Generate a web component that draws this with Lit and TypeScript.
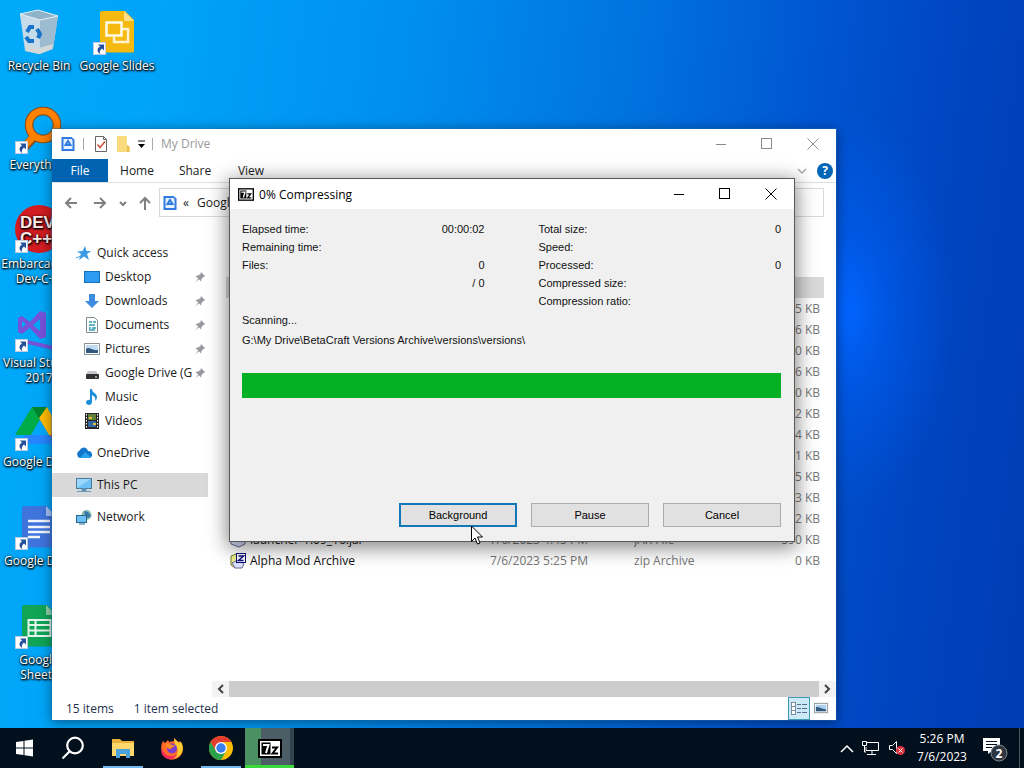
import { LitElement, html, svg, css, nothing, type TemplateResult } from "lit";
import { customElement, property } from "lit/decorators.js";
import { classMap } from "lit/directives/class-map.js";
import { styleMap } from "lit/directives/style-map.js";

const shortcutArrow = svg`
  <rect x="0.5" y="35.5" width="12" height="12" fill="#fff" stroke="#b9cbe0"/>
  <path d="M5 37.5h6v6l-2-2c-2 1.500-2.500 3-2 5.500-3.500-2.500-3-6 0-7.500z" fill="#24509c"/>`;

const docShape = (fill: string, fold: string) => svg`
  <path d="M9 4h23l9 9v31a1.500 1.500 0 0 1-1.500 1.500h-31A1.500 1.500 0 0 1 7 44V6a2 2 0 0 1 2-2z" fill="${fill}"/>
  <path d="M31 4l10 10H32a1 1 0 0 1-1-1z" fill="${fold}"/>`;

const desktopArt: Record<string, TemplateResult> = {
  bin: svg`
    <path d="M5 7l38 2-5 33-14 5-14-3z" fill="#b9d3e4"/>
    <path d="M5 7l20 6 1 34-4-1-11-3z" fill="#c5dbe9"/>
    <path d="M25 13l18-4-5 33-13 5z" fill="#9dbcd2"/>
    <path d="M5 7l18-4 20 6-18 4z" fill="#8fb3c8" stroke="#e4f0f6"/>
    <path d="M10 38l14 3 14-4-1 5-13 5-13-3z" fill="#d3d8da"/>
    <g fill="none" stroke="#1673c9" stroke-width="4"><path d="M12 25l3-5h4"/><path d="M22 22l3 5-2 4"/><path d="M19 34h-5l-3-4"/></g>`,
  slides: svg`${docShape("#f5b90f", "#ffe08a")}
    <path d="M21 30v5h14V22h-6" fill="none" stroke="#fff3cf" stroke-width="2.500"/>
    <rect x="13.500" y="15.500" width="15" height="13" fill="#f5b90f" stroke="#fffbea" stroke-width="2.500"/>${shortcutArrow}`,
  everything: svg`
    <path d="M20 30L8 43" stroke="#8a4a10" stroke-width="9"/>
    <circle cx="28" cy="19" r="14" fill="none" stroke="#8a4a10" stroke-width="8.500"/>
    <path d="M20 29L8 42" stroke="#ff8100" stroke-width="6.500"/>
    <circle cx="28" cy="19" r="14" fill="none" stroke="#ff8100" stroke-width="6.500"/>${shortcutArrow}`,
  dev: svg`
    <circle cx="24" cy="24" r="24" fill="#d21c22"/>
    <text x="5" y="23" class="devText">DEV</text><text x="5" y="39" class="devText">C++</text>${shortcutArrow}`,
  vs: svg`
    <path d="M3 14l4-2 8 6 10-11 6 2v24l-6 2-10-11-8 6-4-2zM7 17v7l4-4zM25 15l-7 6 7 6z" fill="#7652d8" fill-rule="evenodd"/>
    <path d="M12 36l36 8v4L12 40z" fill="#7652d8"/>${shortcutArrow}`,
  drive: svg`
    <path d="M17 4h15L16 32H0z" fill="#00ac47"/><path d="M17 4h15l-7 13z" fill="#00832d"/>
    <path d="M32 4l16 28H34L24 15z" fill="#ffba00"/><path d="M34 32h14l-4 9z" fill="#ea4335"/>
    <path d="M10 32h24l8 9H4z" fill="#2684fc"/>${shortcutArrow}`,
  docs: svg`${docShape("#3f74dd", "#a6c3fa")}
    <path d="M13 19h22M13 25h22M13 30h22M13 35h12" stroke="#f1f5fe" stroke-width="2.500"/>${shortcutArrow}`,
  sheets: svg`${docShape("#10a457", "#8fd3ae")}
    <path d="M13.500 19h22v16h-22zM13 24h23M13 29.500h23M20.500 19v16" fill="none" stroke="#e4f6ec" stroke-width="2"/>${shortcutArrow}`,
};

const driveGlyph = svg`
  <path d="M1.500 1h10l3 2.500V15h-13z" fill="#2f7be0"/><path d="M3.500 3h8l1 1v9h-9z" fill="#e8f1fd"/>
  <path d="M8 5l2.500 4h-5z" fill="none" stroke="#2f7be0" stroke-width="2"/>`;

const smallArt: Record<string, TemplateResult> = {
  star: svg`<path d="M9 1l1.500 5H15l-4 3 2 6-5-3.500L3 15l2-6-4-2.500 5.500-.5z" fill="#3d9be6"/><path d="M0 13l5-2" stroke="#3d9be6"/>`,
  desktop: svg`<rect x="0.500" y="2.500" width="15" height="11" fill="#2f9bf0" stroke="#1270bd"/>`,
  down: svg`<path d="M5 1h6v7h4l-7 7-7-7h4z" fill="#3c8ce0"/>`,
  document: svg`<path d="M2.500.500h8l3 3v12h-11z" fill="#fff" stroke="#7d8a92"/><path d="M5 5h3M9 5h3M5 8h6M5 11h2M8 11h4M5 13h6" stroke="#2f9aa8" stroke-width="1.500"/>`,
  picture: svg`<rect x="0.500" y="2.500" width="15" height="11" fill="#fff" stroke="#8b9399"/><rect x="2" y="4" width="12" height="8" fill="#bfdcf2"/><path d="M2 8c3-3 6 2 12 1v3H2z" fill="#31587c"/>`,
  disk: svg`<path d="M4 6h8l2 3H2z" fill="#c4c6c8"/><rect x="2" y="9" width="13" height="5" rx="1" fill="#2e3033"/><path d="M11 12h2" stroke="#fff"/>`,
  music: svg`<path d="M6 0h2c0 4 5 4 5 8 0 2-1 3-2 4 1-4-1-5-3-6v7c0 4-6 3.500-6 .5 0-2 2-3 4-2.500z" fill="#1c8fdc"/>`,
  video: svg`<rect x="1" width="14" height="16" fill="#26262b"/><rect x="4" y="1" width="8" height="6" fill="#62803b"/><rect x="4" y="8" width="8" height="6" fill="#35689f"/><path d="M5 5h3M9 11h3" stroke="#e2c23c" stroke-width="2"/><path d="M2.500 1v14M13.500 1v14" stroke="#fff" stroke-dasharray="1.500 1.500"/>`,
  cloud: svg`<path d="M4 13a4 4 0 0 1-.500-7.500C6 1 11 2 12 6c5-.5 5.500 7 1 7z" fill="#1277ca"/><path d="M4 13L9 7l6 5c-.5.700-1 1-2 1z" fill="#27a1e8"/>`,
  pc: svg`<rect x="0.500" y="1.500" width="15" height="10" fill="#6cc0f5" stroke="#4d7b9b"/><path d="M1 2h14L1 11z" fill="#9ad7fb"/><path d="M6 12h4v2H6zM1 14.500h14" fill="#5b7f98" stroke="#6b9cc0"/>`,
  network: svg`<circle cx="10.500" cy="6" r="5" fill="#8cb9b0"/><path d="M8 2l4 1 3 4-3 2-3-3z" fill="#3679a8"/><rect x="0.500" y="6.500" width="10" height="7" fill="#6cc0f5" stroke="#27668f"/><path d="M3 15h6" stroke="#27668f"/>`,
  pin: svg`<path d="M9 1l6 6-2 .5-3 3-.5 3.500L6.500 11 2 15l3.500-5L2 6.500 5.500 6 9 3.500z" fill="#95999d"/>`,
  gdrive: driveGlyph,
  check: svg`<g transform="translate(2)"><path d="M2.500.500h8l3 3v12h-11z" fill="#fff" stroke="#666"/><path d="M10.500.500v3h3" fill="none" stroke="#666"/><path d="M4.500 8.500l2.500 3 5-6" fill="none" stroke="#c8503c" stroke-width="1.500"/></g>`,
  folder: svg`<path d="M3 0h9l1 1v8l3 2v5H3z" fill="#f9db7d"/><path d="M13 9l2 1.500V16h-2z" fill="#e8bf4f"/>`,
  zip: svg`<path d="M1 3l5-2 3 3v8l-4 3-4-3z" fill="#eef08b" stroke="#77793a"/><path d="M2 10l6-3 6 4-2 4H5z" fill="#dbe2ff" stroke="#6a6c98"/><rect x="6.500" y="0.500" width="9" height="9" fill="#fff" stroke="#10107e"/><path d="M8.500 3h5l-5 4.500h5" fill="none" stroke="#10107e" stroke-width="1.500"/>`,
  jar: svg`<path d="M1 3l5-2 9 3v8l-6 3-8-3z" fill="#dbe2ff" stroke="#6a6c98"/>`,
  thumbs: svg`<rect x="0.500" y="2.500" width="14" height="10" fill="#fff" stroke="#8b9399"/><rect x="2" y="4" width="11" height="7" fill="#a9d0f0"/><path d="M2 7c3-2 6 2 11 2v2H2z" fill="#31587c"/>`,
  details: svg`<g fill="#fff" stroke="#7a8ca0"><rect x="0.500" y="1.500" width="4" height="4"/><rect x="0.500" y="5.500" width="4" height="4"/><rect x="0.500" y="9.500" width="4" height="4"/></g><path d="M6 3.500h4M11 3.500h5M6 7.500h4M11 7.500h5M6 11.500h4M11 11.500h5" stroke="#56708a"/>`,
};

const icon = (name: string, size = 16) =>
  html`<svg width=${size} height=${size} viewBox="0 0 16 16" aria-hidden="true">${smallArt[name]}</svg>`;

const sevenZip = (w: number, h: number) => html`
  <svg width=${w} height=${h} viewBox="0 0 24 19" aria-hidden="true">
    <rect x="1" y="1" width="22" height="17" fill="#fff" stroke="#000" stroke-width="2"/>
    <rect x="3.500" y="3.500" width="9" height="12" fill="#000"/>
    <path d="M5 6h5.500L8 14" fill="none" stroke="#fff" stroke-width="2"/>
    <path d="M14 8.500h5L14.500 14.500H20" fill="none" stroke="#000" stroke-width="2"/>
  </svg>`;

const windowFont = css`font-family: "Open Sans", "Noto Sans", sans-serif;`;

@customElement("window-controls")
class WindowControls extends LitElement {
  static styles = css`
    :host { display: flex; color: var(--control-color, #000); }
    button { width: 46px; height: 30px; padding: 0; border: 0; background: none; color: inherit; display: grid; place-items: center; }
    svg { fill: none; stroke: currentColor; }
  `;
  render() {
    return html`
      <button aria-label="Minimize"><svg width="12" height="12"><path d="M1 6.500h10"/></svg></button>
      <button aria-label="Maximize"><svg width="12" height="12"><rect x="0.500" y="0.500" width="10" height="10"/></svg></button>
      <button aria-label="Close"><svg width="12" height="12"><path d="M.5.500l11 11M11.500.500l-11 11"/></svg></button>`;
  }
}

interface Shortcut { art: string; label: string; col: number; row: number; }
const shortcuts: Shortcut[] = [
  { art: "bin", label: "Recycle Bin", col: 0, row: 0 },
  { art: "slides", label: "Google Slides", col: 1, row: 0 },
  { art: "everything", label: "Everything", col: 0, row: 1 },
  { art: "dev", label: "Embarcadero Dev-C++", col: 0, row: 2 },
  { art: "vs", label: "Visual Studio 2017", col: 0, row: 3 },
  { art: "drive", label: "Google Drive", col: 0, row: 4 },
  { art: "docs", label: "Google Docs", col: 0, row: 5 },
  { art: "sheets", label: "Google Sheets", col: 0, row: 6 },
];

@customElement("desktop-icons")
class DesktopIcons extends LitElement {
  static styles = css`
    :host { display: block; }
    .shortcut {
      position: absolute; width: 78px; padding: 0; border: 0; background: none; color: #fff;
      ${windowFont} font-size: 12px; line-height: 15px; text-align: center;
      text-shadow: 0 1px 2px #000, 1px 1px 2px #000, 0 0 3px #0008;
    }
    .art { display: block; margin: 0 auto 3px; overflow: visible; }
    .devText { font: bold 17px "Liberation Sans", sans-serif; fill: #ffe9e9; }
  `;
  render() {
    return shortcuts.map((s) => html`
      <button class="shortcut" style=${styleMap({ left: `${s.col * 78}px`, top: `${7 + s.row * 99}px` })}>
        <svg class="art" width="48" height="48" viewBox="0 0 48 48" aria-hidden="true">${desktopArt[s.art]}</svg>
        ${s.label}
      </button>`);
  }
}

interface Place { art: string; label: string; child?: boolean; pinned?: boolean; gap?: boolean; active?: boolean; }
const places: Place[] = [
  { art: "star", label: "Quick access" },
  { art: "desktop", label: "Desktop", child: true, pinned: true },
  { art: "down", label: "Downloads", child: true, pinned: true },
  { art: "document", label: "Documents", child: true, pinned: true },
  { art: "picture", label: "Pictures", child: true, pinned: true },
  { art: "disk", label: "Google Drive (G:)", child: true, pinned: true },
  { art: "music", label: "Music", child: true },
  { art: "video", label: "Videos", child: true },
  { art: "cloud", label: "OneDrive", gap: true },
  { art: "pc", label: "This PC", gap: true, active: true },
  { art: "network", label: "Network", gap: true },
];

interface FileRow { art?: string; name?: string; date?: string; type?: string; size?: string; selected?: boolean; }
const files: FileRow[] = [
  {},
  { selected: true },
  ...["95", "66", "90", "36", "00", "12", "44", "1", "35", "23", "12"].map((n) => ({ size: `${n} KB` })),
  { art: "jar", name: "launcher-1.09_16.jar", date: "7/6/2023 4:45 PM", type: "JAR File", size: "590 KB" },
  { art: "zip", name: "Alpha Mod Archive", date: "7/6/2023 5:25 PM", type: "zip Archive", size: "0 KB" },
];

@customElement("file-explorer")
class FileExplorer extends LitElement {
  static styles = css`
    :host {
      display: flex; flex-direction: column; background: #fff; color: #1b1b1b;
      ${windowFont} font-size: 12px; line-height: 16px; --control-color: #8a8a8a;
      box-shadow: 0 0 0 1px #1c6fb866, 0 2px 12px #0007;
    }
    svg { flex: none; }
    button { font: inherit; color: inherit; border: 0; background: none; padding: 0; }
    .title { display: flex; align-items: center; height: 30px; padding-left: 8px; }
    .title .name { color: #999; margin-left: 8px; flex: 1; }
    .bar { width: 1px; height: 12px; background: #aaa; }
    .quick { display: flex; align-items: center; gap: 7px; }
    .tabs { display: flex; align-items: center; height: 23px; border-bottom: 1px solid #dfdfdf; }
    .tab { width: 58px; height: 23px; }
    .tab:nth-child(4) { width: 54px; }
    .tab.file { width: 56px; background: #0063b1; color: #fff; }
    .help { margin: 0 3px 0 10px; width: 16px; height: 16px; border-radius: 50%; background: #0067b8; color: #fff; font-weight: bold; line-height: 16px; }
    .chev { margin-left: auto; }
    .path { display: flex; align-items: center; gap: 7px; padding: 5px 12px 5px; height: 29px; }
    .arrows { display: flex; align-items: center; gap: 11px; }
    .arrows button { display: grid; }
    .field { display: flex; align-items: center; box-sizing: border-box; height: 29px; border: 1px solid #d9d9d9; padding: 0 2px; gap: 5px; }
    .address { flex: 1; min-width: 0; }
    .search { width: 196px; font: inherit; }
    .main { flex: 1; min-height: 0; display: grid; grid-template-columns: 156px minmax(0, 1fr); }
    .nav { padding-top: 19px; }
    .place { display: flex; align-items: center; gap: 5px; height: 24px; padding-left: 24px; color: inherit; text-decoration: none; }
    .child { padding-left: 32px; }
    .gap { margin-top: 8px; }
    .active { background: #d9d9d9; }
    .text { flex: 1; min-width: 0; overflow: hidden; white-space: nowrap; }
    .pinned { padding-right: 2px; gap: 0; }
    .pinned .text { margin-left: 5px; margin-right: 1px; }
    .list { display: flex; flex-direction: column; padding: 4px 0 0 18px; }
    .scroll { flex: 1; }
    table { width: calc(100% - 12px); border-collapse: collapse; table-layout: fixed; }
    th { height: 30px; padding: 0; }
    td { height: 21px; padding: 0; color: #777; white-space: nowrap; overflow: hidden; }
    .nameCol { width: 264px; } .dateCol { width: 144px; } .typeCol { width: 100px; }
    td.fileName { color: #111; }
    .fileName span { display: flex; align-items: center; gap: 4px; padding-left: 4px; }
    td.size { text-align: right; padding-right: 4px; }
    .selected { background: #d9d9d9; }
    .hscroll { display: flex; align-items: center; height: 16px; margin-left: -14px; background: #f3f3f3; }
    .hscroll button { width: 17px; display: grid; place-items: center; }
    .thumb { flex: 1; height: 16px; background: #cdcdcd; }
    .status { display: flex; align-items: center; gap: 20px; height: 23px; padding: 0 5px 0 14px; color: #25304f; }
    .views { display: flex; align-items: center; margin-left: auto; gap: 2px; }
    .views button { display: grid; place-items: center; width: 20px; height: 21px; }
    .views .on { background: #cbe9f7; outline: 1px solid #3d9ab5; }
  `;

  private arrow(label: string, path: string, width = 14) {
    return html`<button aria-label=${label}><svg width=${width} height="14" viewBox="0 0 ${width} 14" fill="none" stroke="#808080" stroke-width="2"><path d=${path}/></svg></button>`;
  }

  render() {
    return html`
      <header class="title">
        <div class="quick">
          ${icon("gdrive")}<span class="bar"></span>
          ${icon("check")}${icon("folder")}
          <svg width="8" height="8"><path d="M1 1h7" stroke="#111"/><path d="M1 4h7L4.500 8z"/></svg>
          <span class="bar"></span>
        </div>
        <span class="name">My Drive</span>
        <window-controls></window-controls>
      </header>
      <nav class="tabs">
        <button class="tab file">File</button>
        <button class="tab">Home</button><button class="tab">Share</button><button class="tab">View</button>
        <button class="chev" aria-label="Collapse ribbon"><svg width="10" height="8" fill="none" stroke="#aaa" stroke-width="1.500"><path d="M1 2l4 4 4-4"/></svg></button>
        <button class="help">?</button>
      </nav>
      <div class="path">
        <div class="arrows">
          ${this.arrow("Back", "M13 7H2M7 2L2 7l5 5")}
          ${this.arrow("Forward", "M5 7h11M11 2l5 5-5 5", 18)}
          ${this.arrow("Recent", "M2 6l3 3 3-3", 9)}
          ${this.arrow("Up", "M7 14V2M2 7l5-5 5 5")}
        </div>
        <div class="field address">${icon("gdrive")}<span>«</span><span>&nbsp;Google Drive</span></div>
        <input class="field search" aria-label="Search My Drive">
      </div>
      <div class="main">
        <nav class="nav">
          ${places.map((p) => html`
            <a href="#" class=${classMap({ place: true, child: !!p.child, pinned: !!p.pinned, gap: !!p.gap, active: !!p.active })}>
              ${icon(p.art)}<span class="text">${p.label}</span>${p.pinned ? icon("pin", 12) : nothing}
            </a>`)}
        </nav>
        <section class="list">
          <div class="scroll">
            <table>
              <colgroup><col class="nameCol"><col class="dateCol"><col class="typeCol"><col></colgroup>
              <thead><tr><th aria-label="Name"></th><th aria-label="Date modified"></th><th aria-label="Type"></th><th aria-label="Size"></th></tr></thead>
              <tbody>
                ${files.map((f) => html`
                  <tr class=${classMap({ selected: !!f.selected })}>
                    <td class="fileName">${f.name ? html`<span>${icon(f.art!)}${f.name}</span>` : nothing}</td>
                    <td>${f.date}</td><td>${f.type}</td><td class="size">${f.size}</td>
                  </tr>`)}
              </tbody>
            </table>
          </div>
          <div class="hscroll">
            <button aria-label="Scroll left"><svg width="7" height="10" fill="none" stroke="#444" stroke-width="2"><path d="M6 1L2 5l4 4"/></svg></button>
            <div class="thumb"></div>
            <button aria-label="Scroll right"><svg width="7" height="10" fill="none" stroke="#444" stroke-width="2"><path d="M1 1l4 4-4 4"/></svg></button>
          </div>
        </section>
      </div>
      <footer class="status">
        <span>15 items</span><span>1 item selected</span>
        <div class="views">
          <button class="on" aria-label="Details"><svg width="16" height="15">${smallArt.details}</svg></button>
          <button aria-label="Large icons">${icon("thumbs", 15)}</button>
        </div>
      </footer>`;
  }
}

@customElement("compress-dialog")
class CompressDialog extends LitElement {
  @property({ type: Number }) percent = 0;

  static styles = css`
    :host {
      display: flex; flex-direction: column; box-sizing: border-box; border: 1px solid #585858; background: #f0f0f0; color: #111;
      font-family: "Liberation Sans", Arial, sans-serif; font-size: 11px; box-shadow: 0 4px 18px 2px #0007;
    }
    .title { display: flex; align-items: center; height: 30px; background: #fff; padding-left: 8px; ${windowFont} font-size: 12px; color: #000; }
    .title span { flex: 1; margin-left: 5px; }
    .body { flex: 1; display: flex; flex-direction: column; padding: 11px 13px 14px 12px; }
    .stats { display: grid; grid-template-columns: 1fr 1fr; column-gap: 54px; }
    dl { margin: 0; display: grid; grid-template-columns: auto 1fr; grid-auto-rows: 18px; line-height: 18px; }
    dt, dd { margin: 0; } dd { text-align: right; }
    p { margin: 0; line-height: 20px; white-space: nowrap; }
    progress { appearance: none; display: block; width: 100%; height: 25px; margin-top: 23px; border: 0; }
    progress::-webkit-progress-bar { background: #e6e6e6; }
    progress::-webkit-progress-value { background: #06b025; }
    .actions { margin-top: auto; display: flex; justify-content: flex-end; gap: 14px; }
    .actions button { width: 118px; height: 24px; padding: 0; font: inherit; color: #000; background: #e1e1e1; border: 1px solid #adadad; }
    .actions .focused { border: 2px solid #1478b8; }
  `;

  render() {
    const left = [["Elapsed time:", "00:00:02"], ["Remaining time:", ""], ["Files:", "0"], ["", "/ 0"]];
    const right = [["Total size:", "0"], ["Speed:", ""], ["Processed:", "0"], ["Compressed size:", ""], ["Compression ratio:", ""]];
    const list = (rows: string[][]) => html`<dl>${rows.map(([k, v]) => html`<dt>${k}</dt><dd>${v}</dd>`)}</dl>`;
    return html`
      <header class="title">${sevenZip(16, 13)}<span>${this.percent}% Compressing</span><window-controls></window-controls></header>
      <div class="body">
        <div class="stats">${list(left)}${list(right)}</div>
        <p>Scanning...</p>
        <p>G:\\My Drive\\BetaCraft Versions Archive\\versions\\versions\\</p>
        <progress max="1" value="1" aria-label="Compression progress"></progress>
        <div class="actions"><button class="focused">Background</button><button>Pause</button><button>Cancel</button></div>
      </div>`;
  }
}

@customElement("task-bar")
class TaskBar extends LitElement {
  static styles = css`
    :host { display: flex; align-items: stretch; background: #020f1d; color: #fff; ${windowFont} font-size: 12px; line-height: 18px; }
    button { padding: 0; border: 0; background: none; color: inherit; font: inherit; display: grid; place-items: center; }
    .app { width: 49px; border-bottom: 3px solid transparent; border-top: 3px solid transparent; box-sizing: border-box; }
    .running { background: linear-gradient(#76b9ed, #76b9ed) center bottom / 40px 2px no-repeat; background-origin: border-box; background-clip: border-box; }
    .current { background: linear-gradient(90deg, #4a9060 0 16px, #4c5d66 16px 45px, #33464f 45px); background-clip: border-box; background-origin: border-box; border-bottom-color: #3ad83a; }
    .tray { margin-left: auto; display: flex; align-items: center; }
    .tray svg { fill: none; stroke: #fff; }
    .icons { display: flex; align-items: center; gap: 8px; }
    .clock { width: 64px; text-align: center; margin: 0 5px 0 4px; display: block; white-space: nowrap; }
    .notice { width: 32px; margin-right: 8px; }
    .badge { font: bold 12px "Noto Sans", sans-serif; fill: #fff; stroke: none; }
    .peek { width: 4px; align-self: stretch; border-left: 1px solid #4a545e; }
  `;
  render() {
    return html`
      <button class="app" aria-label="Start"><svg width="18" height="18" fill="#fff"><path d="M0 3l7.500-1v6.500H0zM8.500 1.800L17 .5v8H8.500zM0 9.500h7.500V16L0 15zM8.500 9.500H17v8l-8.500-1.300z"/></svg></button>
      <button class="app" aria-label="Search"><svg width="24" height="24" fill="none" stroke="#fff" stroke-width="2.200"><circle cx="13" cy="9.500" r="7.800"/><path d="M7.500 15.500L.5 22.500"/></svg></button>
      <button class="app running" aria-label="File Explorer"><svg width="22" height="20"><path d="M0 1h8l2 2h12v15H0z" fill="#e9b03a"/><path d="M0 5h22v13H0z" fill="#ffd76b"/><path d="M4 11h14v9h-4v-4H8v4H4z" fill="#4aa3df"/></svg></button>
      <button class="app" aria-label="Firefox"><svg width="24" height="24">
        <path d="M3 5l2 2 3-3 1 2 5-1 0-3 4 4 2-1c3 4 4 10 1 14-4 6-13 6-17 1C1 16 0 10 3 5z" fill="#ff6a2b"/>
        <path d="M14 2l5 5 2-1c3 5 2 9 0 12-3 4-6 4-8 4 6-4 6-9 2-13z" fill="#ffcd2e"/><path d="M1.500 12c3 9 10 10 16 6-3 7-13 7-16-1z" fill="#f5285c"/>
        <circle cx="12" cy="12.500" r="5" fill="#7a3fd0"/><path d="M5 8c4-2 6 2 10 1-1 3-4 2-4 4-3 0-5-2-6-5z" fill="#ff8a24"/></svg></button>
      <button class="app running" aria-label="Chrome"><svg width="24" height="24">
        <circle cx="12" cy="12" r="12" fill="#fbbc05"/><path d="M12 0A12 12 0 0 1 22.400 6H12L6.800 15 1.600 6A12 12 0 0 1 12 0z" fill="#e33b2e"/>
        <path d="M1.600 6A12 12 0 0 0 12 24l5.200-9-5.200 3-5.200-3z" fill="#2ba24c"/><circle cx="12" cy="12" r="6" fill="#fff"/><circle cx="12" cy="12" r="4.700" fill="#3a7ff0"/></svg></button>
      <button class="app current" aria-label="7-Zip">${sevenZip(24, 19)}</button>
      <div class="tray">
        <div class="icons">
          <button aria-label="Show hidden icons"><svg width="14" height="9" stroke-width="1.500"><path d="M1 8l6-6 6 6"/></svg></button>
          <svg width="18" height="16"><path d="M5 2.500h11.500v8H4V7M10 11v3M5 14.500h9M.5 1.500h4v4h-4zM2.500 6v6H4"/></svg>
          <svg width="18" height="16"><path d="M1.500 5.500h3l4-4v12l-4-4h-3z"/><circle cx="12.500" cy="10.500" r="4.500" fill="#d5323c" stroke="none"/><path d="M10.500 8.500l4 4M14.500 8.500l-4 4"/></svg>
        </div>
        <button class="clock"><div>5:26 PM</div><div>7/6/2023</div></button>
        <button class="notice" aria-label="Notifications"><svg width="26" height="28"><path d="M1 4h17v13h-8l-4 3v-3H1z" fill="#fff" stroke="none"/><path d="M4 7.500h11M4 10.500h11M4 13.500h6" stroke="#020f1d"/><circle cx="17" cy="19" r="8" fill="#2c3540" stroke="#7e868f"/><text class="badge" x="13.500" y="23.500">2</text></svg></button>
        <div class="peek"></div>
      </div>`;
  }
}

@customElement("app-root")
class AppRoot extends LitElement {
  static styles = css`
    :host { display: flex; flex-direction: column; height: 100vh; overflow: hidden; }
    .desktop {
      position: relative; flex: 1; min-height: 0; overflow: hidden;
      background:
        radial-gradient(ellipse 110px 200px at 845px 310px, #0064ff 0%, #005cf099 40%, #0058e000 100%),
        linear-gradient(97deg, #00aaf9 0%, #00a4f8 14%, #008eee 38%, #0072df 58%, #0054d0 75%, #0046c2 86%, #003cb2 100%);
    }
    .explorer { position: absolute; left: 52px; top: 129px; width: 784px; height: 591px; }
    .dialog { position: absolute; left: 229px; top: 178px; width: 566px; height: 364px; }
    .pointer { position: absolute; left: 471px; top: 525px; }
    .taskbar { height: 40px; }
  `;
  render() {
    return html`
      <main class="desktop">
        <desktop-icons></desktop-icons>
        <file-explorer class="explorer"></file-explorer>
        <compress-dialog class="dialog" percent="0"></compress-dialog>
        <svg class="pointer" width="13" height="20" fill="#fff" stroke="#000"><path d="M.5 1v15.500l3.500-3.500 2.500 6 2.500-1-2.500-6h5z"/></svg>
      </main>
      <task-bar class="taskbar"></task-bar>`;
  }
}
